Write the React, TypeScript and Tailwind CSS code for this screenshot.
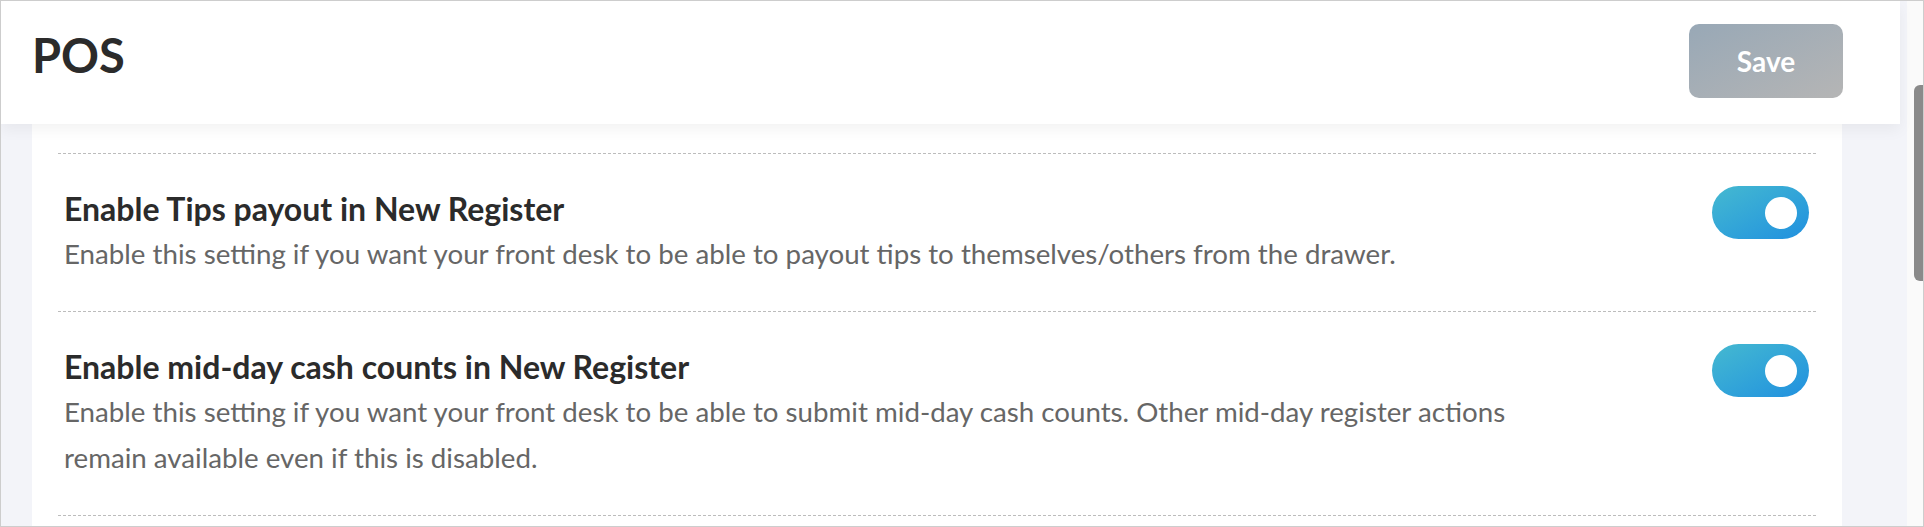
const SETTINGS = [
  {
    title: 'Enable Tips payout in New Register',
    desc: 'Enable this setting if you want your front desk to be able to payout tips to themselves/others from the drawer.',
  },
  {
    title: 'Enable mid-day cash counts in New Register',
    desc: 'Enable this setting if you want your front desk to be able to submit mid-day cash counts. Other mid-day register actions remain available even if this is disabled.',
  },
]

function Toggle() {
  return (
    <div className="flex h-[53px] w-[97px] shrink-0 items-center justify-end rounded-full bg-linear-to-br from-[#45b9d0] to-[#2190df] pr-[12px]">
      <span className="block h-[32px] w-[32px] rounded-full bg-white" />
    </div>
  )
}

export default function App() {
  return (
    <div className="flex h-[527px] w-[1924px] overflow-hidden border border-[#cdcdcd] font-['Lato',sans-serif]">
      <div className="flex min-w-0 flex-1 flex-col bg-[#f3f4f9]">
        <header className="relative z-10 flex h-[123px] w-[1899px] shrink-0 items-start justify-between bg-white pl-[31px] pr-[57px] shadow-[0_6px_14px_rgba(0,0,0,0.05)]">
          <h1 className="pt-[35px] text-[47px] leading-[38px] font-bold text-[#2b2b2b]">POS</h1>
          <button className="mt-[23px] h-[74px] w-[154px] rounded-[10px] bg-linear-to-br from-[#98a8b6] to-[#b5b5b5] text-[28px] font-bold text-white">
            Save
          </button>
        </header>

        <div className="ml-[31px] w-[1810px] flex-1 bg-white px-[26px] pt-[29px]">
          {SETTINGS.map(({ title, desc }) => (
            <div
              key={title}
              className="flex items-start justify-between border-t border-dashed border-[#bcbcbc] pt-[32px] pb-[34px] pl-[6px] pr-[7px]"
            >
              <div className="w-[1480px] pt-[5px]">
                <div className="text-[32px] leading-[35px] font-bold text-[#2b2b2b]">{title}</div>
                <p className="mt-[5px] text-[27.7px] leading-[46px] text-[#666666]">{desc}</p>
              </div>
              <Toggle />
            </div>
          ))}
          <div className="border-t border-dashed border-[#bcbcbc]" />
        </div>
      </div>

      <div className="w-[16px] shrink-0 bg-[#fafafa] pt-[84px]">
        <div className="ml-auto h-[196px] w-[9px] rounded-l-[6px] bg-[#8a8a8a]" />
      </div>
    </div>
  )
}
